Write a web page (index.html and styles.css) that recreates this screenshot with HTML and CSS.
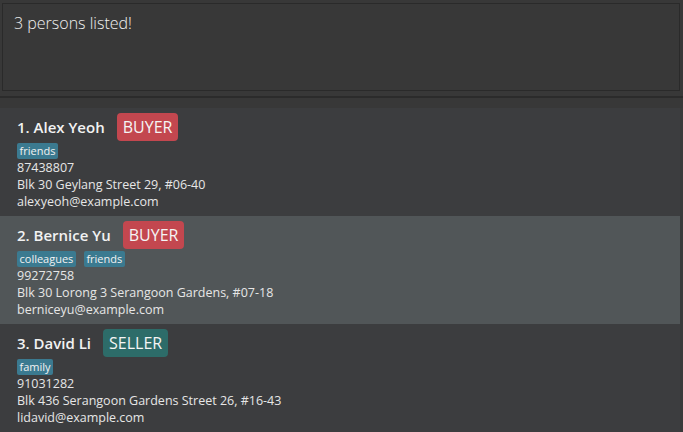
FILE: index.html
```html
<!DOCTYPE html>
<html>
<head>
<meta charset="utf-8">
<link rel="stylesheet" href="styles.css">
</head>
<body>
<div class="app">
  <div class="result-pane">
    <div class="result-box">3 persons listed!</div>
  </div>
  <div class="divider"></div>
  <div class="list-pane">
    <div class="list">
      <div class="card">
        <div class="name-row"><span class="name">1. Alex Yeoh</span><span class="role buyer">BUYER</span></div>
        <div class="tags"><span class="tag">friends</span></div>
        <div class="line">87438807</div>
        <div class="line">Blk 30 Geylang Street 29, #06-40</div>
        <div class="line">alexyeoh@example.com</div>
      </div>
      <div class="card selected">
        <div class="name-row"><span class="name">2. Bernice Yu</span><span class="role buyer">BUYER</span></div>
        <div class="tags"><span class="tag">colleagues</span><span class="tag">friends</span></div>
        <div class="line">99272758</div>
        <div class="line">Blk 30 Lorong 3 Serangoon Gardens, #07-18</div>
        <div class="line">berniceyu@example.com</div>
      </div>
      <div class="card">
        <div class="name-row"><span class="name">3. David Li</span><span class="role seller">SELLER</span></div>
        <div class="tags"><span class="tag">family</span></div>
        <div class="line">91031282</div>
        <div class="line">Blk 436 Serangoon Gardens Street 26, #16-43</div>
        <div class="line">lidavid@example.com</div>
      </div>
    </div>
    <div class="scroll-strip"></div>
  </div>
</div>
</body>
</html>
```
FILE: styles.css
```css
html, body {
  margin: 0;
  padding: 0;
  background: #383838;
  font-family: "Open Sans", "Noto Sans", sans-serif;
  overflow: hidden;
}
.app {
  width: 683px;
  height: 432px;
  display: flex;
  flex-direction: column;
}
.result-pane {
  padding: 3px 3px 0 2px;
  height: 93px;
  box-sizing: border-box;
}
.result-box {
  height: 88px;
  box-sizing: border-box;
  border: 1px solid #2a2a2a;
  background: #383838;
  color: #f0f0f0;
  font-size: 16px;
  font-weight: 300;
  padding: 8px 11px;
  line-height: 22px;
}
.divider {
  height: 2px;
  margin-top: 3px;
  background: #2b2b2b;
}
.list-pane {
  flex: 1;
  display: flex;
  padding-top: 10px;
}
.list {
  width: 680px;
  display: flex;
  flex-direction: column;
}
.scroll-strip {
  width: 3px;
  background: #3a3a3a;
}
.card {
  height: 108px;
  box-sizing: border-box;
  background: #3c3d3f;
  padding: 5px 0 0 17px;
  color: #e6e6e6;
}
.card.selected {
  background: #515658;
}
.name-row {
  display: flex;
  align-items: center;
  height: 28px;
}
.name {
  font-size: 15px;
  font-weight: 600;
  color: #f2f2f2;
}
.role {
  margin-left: 12px;
  height: 28px;
  box-sizing: border-box;
  padding: 0 6px;
  border-radius: 4px;
  font-size: 16px;
  line-height: 28px;
  color: #f5f5f5;
}
.buyer { background: #c3474f; }
.seller { background: #2d6c69; }
.tags {
  display: flex;
  gap: 8px;
  margin-top: 2px;
  height: 16px;
}
.tag {
  background: #3b7a90;
  color: #f2f2f2;
  font-size: 11px;
  line-height: 16px;
  padding: 0 2.5px;
  border-radius: 2px;
}
.line {
  font-size: 12.5px;
  line-height: 17px;
  color: #e6e6e6;
}
```
